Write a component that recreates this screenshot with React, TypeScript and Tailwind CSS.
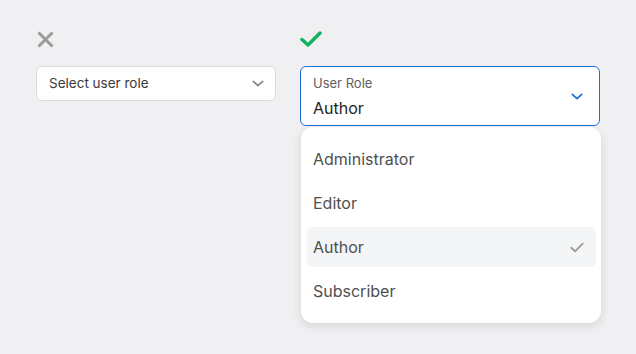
import { type FC } from 'react';

const roles = ['Administrator', 'Editor', 'Author', 'Subscriber'];

const Chevron: FC<{ className?: string }> = ({ className }) => (
  <svg viewBox="0 0 14 8" className={className} fill="none" stroke="currentColor" strokeWidth={2} strokeLinecap="round" strokeLinejoin="round">
    <path d="M1.5 1.5 7 6.5l5.5-5" />
  </svg>
);

const Check: FC<{ className?: string; strokeWidth?: number }> = ({ className, strokeWidth = 3 }) => (
  <svg viewBox="0 0 22 16" className={className} fill="none" stroke="currentColor" strokeWidth={strokeWidth} strokeLinecap="round" strokeLinejoin="round">
    <path d="M2 8.5 8 14 20 2" />
  </svg>
);

export default function App() {
  return (
    <div className="min-h-screen bg-[#f0f0f2] pt-[31px] pl-[36px] flex gap-6 font-['Inter',sans-serif]">
      {/* Wrong */}
      <div className="w-[240px]">
        <div className="h-[17px] mb-[18px]">
          <svg viewBox="0 0 17 17" className="w-[17px] h-[17px] ml-[1px] text-[#9b9b9b]" fill="none" stroke="currentColor" strokeWidth={3}>
            <path d="M1.5 1.5l14 14M15.5 1.5l-14 14" />
          </svg>
        </div>
        <div className="h-[35px] bg-white border border-[#dcdcdf] rounded-md flex items-center justify-between pl-3 pr-[11px]">
          <span className="text-[13.5px] text-[#3a3a3a]">Select user role</span>
          <Chevron className="w-[12px] h-[7px] text-[#8a8a8a]" />
        </div>
      </div>

      {/* Right */}
      <div className="w-[300px]">
        <div className="h-[17px] mb-[18px]">
          <Check className="w-[22px] h-[16px] text-[#13b25f]" strokeWidth={3.5} />
        </div>
        <div className="h-[60px] bg-white border border-[#1c6fd6] rounded-md flex items-center justify-between pl-3 pr-[16px]">
          <div className="flex flex-col">
            <span className="text-[13px] leading-4 text-[#606060]">User Role</span>
            <span className="text-[16px] leading-5 mt-[7px] text-[#1e1e1e]">Author</span>
          </div>
          <Chevron className="w-[12px] h-[7px] text-[#1c6fd6]" />
        </div>
        <div className="w-[300px] mt-[1px] ml-[1px] bg-white rounded-xl shadow-[0_3px_10px_rgba(0,0,0,0.12)] pl-[6px] pr-[5px] py-3 flex flex-col gap-1">
          {roles.map((role) => (
            <div
              key={role}
              className={`h-10 rounded-md flex items-center justify-between pl-[6px] pr-[12px] text-[16px] text-[#4f4f4f] ${role === 'Author' ? 'bg-[#f4f5f7]' : ''}`}
            >
              <span>{role}</span>
              {role === 'Author' && <Check className="w-[14px] h-[11px] text-[#9a9a9a]" strokeWidth={3} />}
            </div>
          ))}
        </div>
      </div>
    </div>
  );
}
